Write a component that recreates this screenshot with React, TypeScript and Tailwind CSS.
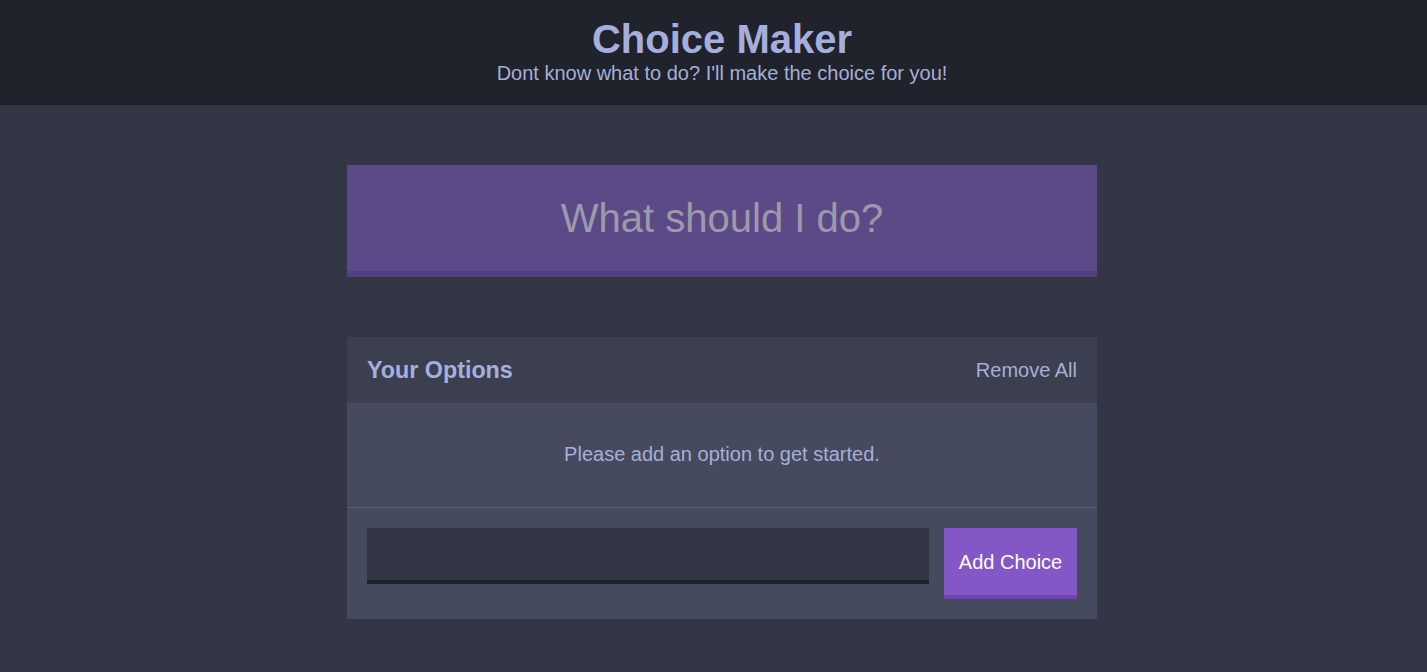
import React from "react";

export default function App() {
  return (
    <div
      className="min-h-[672px] bg-[#333645] text-[#a5afd7]"
      style={{ fontFamily: '"Liberation Sans", Arial, sans-serif' }}
    >
      <header className="bg-[#20222c] pt-4 pb-5 pl-[17px] text-center">
        <h1 className="text-[40px] font-bold leading-[46px] text-[#a5afdc]">Choice Maker</h1>
        <h2 className="text-[20px] leading-[23px] text-[#a5afd7]">
          Dont know what to do? I'll make the choice for you!
        </h2>
      </header>
      <div className="pl-[17px]">
        <main className="mx-auto w-[750px] pt-[60px] pb-10">
          <button
            disabled
            className="block w-full border-b-[6px] border-[#523f7f] bg-[#5c4a88] py-[30px] text-[40px] leading-[46px] text-[#9c9aa8]"
          >
            What should I do?
          </button>
          <section className="mt-[60px] bg-[#464a5e]">
            <div className="flex items-center justify-between bg-[#3c3f4f] px-5 py-5">
              <h3 className="text-[23.3px] font-bold leading-[26px] text-[#a5afdc]">Your Options</h3>
              <button className="text-[20px] leading-[23px] text-[#a5afd7]">Remove All</button>
            </div>
            <p className="pt-10 pb-[41px] text-center text-[20px] leading-[23px] text-[#a5afd7]">
              Please add an option to get started.
            </p>
            <form className="flex items-start gap-[15px] border-t border-[#5b5f73] px-5 pt-5 pb-5">
              <input
                type="text"
                className="h-[56px] flex-1 border-b-4 border-[#20222c] bg-[#333645] px-3 text-[18px] text-white outline-none"
              />
              <button
                type="button"
                className="h-[71px] w-[133px] border-b-4 border-[#6d43ad] bg-[#8357c5] text-[20px] text-white"
              >
                Add Choice
              </button>
            </form>
          </section>
        </main>
      </div>
    </div>
  );
}
